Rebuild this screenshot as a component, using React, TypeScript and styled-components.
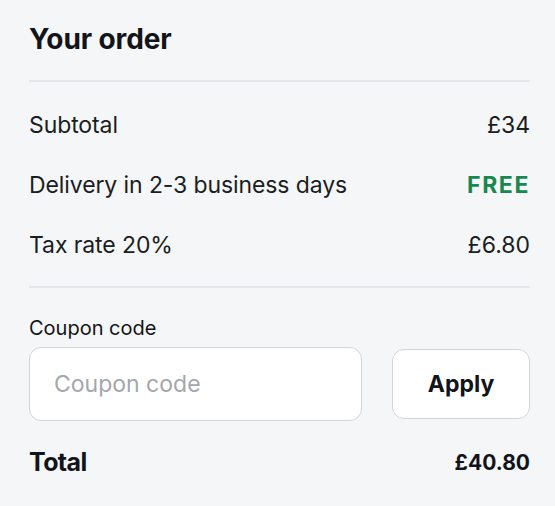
import styled, { createGlobalStyle } from "styled-components";

const GlobalStyle = createGlobalStyle`
  body {
    margin: 0;
    background: #f5f6f8;
    font-family: Inter, "Noto Sans", sans-serif;
    color: #111418;
  }
`;

const rows = [
  { label: "Subtotal", value: "£34" },
  { label: "Delivery in 2-3 business days", value: "FREE", free: true },
  { label: "Tax rate 20%", value: "£6.80" },
];

const App = () => {
  return (
    <>
      <GlobalStyle />
      <Panel>
        <Title>Your order</Title>
        <Divider />
        <Rows>
          {rows.map((r) => (
            <Row key={r.label}>
              <RowLabel>{r.label}</RowLabel>
              <RowValue $free={r.free}>{r.value}</RowValue>
            </Row>
          ))}
        </Rows>
        <Divider />
        <CouponLabel>Coupon code</CouponLabel>
        <CouponRow>
          <CouponInput placeholder="Coupon code" />
          <ApplyButton>Apply</ApplyButton>
        </CouponRow>
        <TotalRow>
          <TotalLabel>Total</TotalLabel>
          <TotalValue>£40.80</TotalValue>
        </TotalRow>
      </Panel>
    </>
  );
};

export default App;

const Panel = styled.div`
  padding: 20px 25px 0 29px;
  display: flex;
  flex-direction: column;
`;

const Title = styled.h2`
  margin: 0;
  font-size: 28px;
  font-weight: 700;
  letter-spacing: -0.1px;
  line-height: 38px;
  padding-bottom: 22px;
`;

const Divider = styled.div`
  height: 2px;
  background: #e4e6ea;
`;

const Rows = styled.div`
  display: flex;
  flex-direction: column;
  padding: 13px 0 11px;
`;

const Row = styled.div`
  display: flex;
  justify-content: space-between;
  align-items: center;
  height: 60px;
  font-size: 23px;
  letter-spacing: -0.1px;
`;

const RowLabel = styled.span`
  color: #1a1d21;
`;

const RowValue = styled.span<{ $free?: boolean }>`
  color: ${(p) => (p.$free ? "#17894e" : "#1a1d21")};
  font-weight: ${(p) => (p.$free ? 700 : 400)};
  letter-spacing: ${(p) => (p.$free ? "1.6px" : "normal")};
`;

const CouponLabel = styled.div`
  font-size: 20px;
  margin-top: 28px;
  line-height: 24px;
`;

const CouponRow = styled.div`
  display: flex;
  gap: 30px;
  align-items: center;
  margin-top: 7px;
`;

const CouponInput = styled.input`
  flex: 1;
  min-width: 0;
  height: 74px;
  box-sizing: border-box;
  border: 1.5px solid #d3d5d9;
  border-radius: 12px;
  background: #fff;
  padding: 0 24px;
  font-family: inherit;
  font-size: 23px;
  outline: none;
  &::placeholder {
    color: #a3a7ad;
  }
`;

const ApplyButton = styled.button`
  flex-shrink: 0;
  width: 138px;
  height: 70px;
  box-sizing: border-box;
  border: 1.5px solid #d3d5d9;
  border-radius: 12px;
  background: #fff;
  font-family: inherit;
  font-size: 23px;
  font-weight: 700;
  color: #111418;
`;

const TotalRow = styled.div`
  display: flex;
  justify-content: space-between;
  align-items: center;
  margin-top: 26px;
`;

const TotalLabel = styled.span`
  font-size: 25px;
  font-weight: 700;
  letter-spacing: -0.6px;
`;

const TotalValue = styled.span`
  font-size: 21px;
  font-weight: 700;
`;
